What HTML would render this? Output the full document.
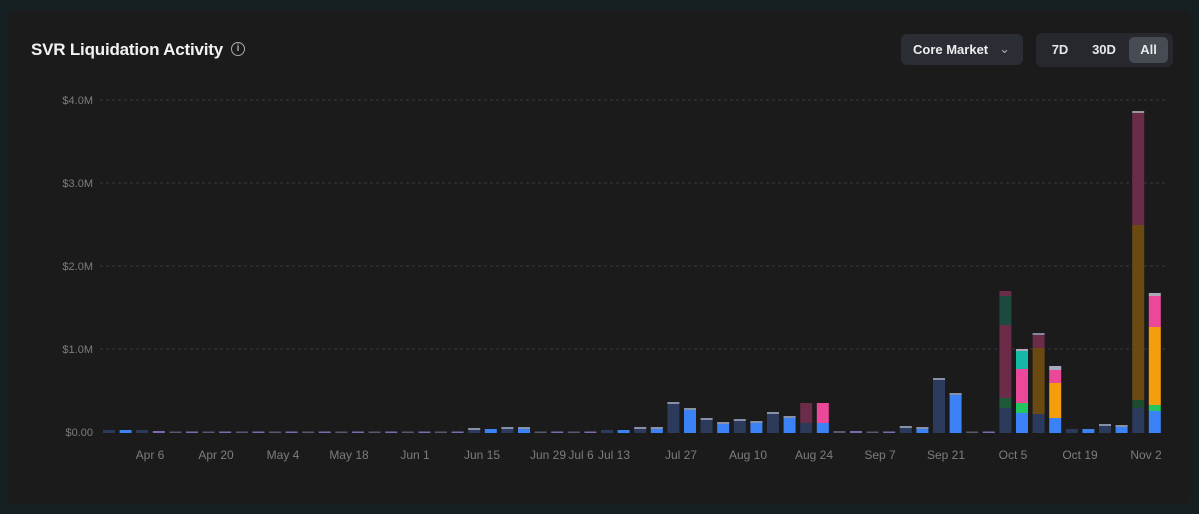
<!DOCTYPE html>
<html><head><meta charset="utf-8"><style>
body{margin:0;width:1199px;height:514px;background:#162022;overflow:hidden;font-family:"Liberation Sans",sans-serif}
.card{position:absolute;left:8px;top:10px;width:1183px;height:494px;background:#1b1b1c;border-radius:6px}
.title{position:absolute;left:31px;top:40px;color:#f2f2f2;font-size:17px;font-weight:bold;letter-spacing:-0.2px}
.info{position:absolute;left:231px;top:42px;width:12px;height:12px;border:1.5px solid #aaa;border-radius:50%;color:#aaa;font-size:10px;text-align:center;line-height:12px;font-weight:bold}
.dd{position:absolute;left:901px;top:34px;width:122px;height:31px;background:#2a2d33;border-radius:6px;color:#eee;font-size:13px;font-weight:bold;line-height:31px;padding-left:12px;box-sizing:border-box}
.dd span{position:absolute;right:13px;top:-1px;color:#aaa;font-weight:normal}
.seg{position:absolute;left:1036px;top:33px;width:137px;height:34px;background:#26282d;border-radius:6px}
.seg div{position:absolute;top:4px;height:26px;line-height:26px;color:#e8e8e8;font-size:13px;font-weight:bold;text-align:center}
</style></head><body>
<div class="card"></div>
<div class="title">SVR Liquidation Activity</div>
<div class="info">i</div>
<div class="dd">Core Market<span>&#8964;</span></div>
<div class="seg"><div style="left:6px;width:36px">7D</div><div style="left:46px;width:44px">30D</div><div style="left:93px;width:39px;background:#474b54;border-radius:5px">All</div></div>
<svg id="c" width="1199" height="514" style="position:absolute;left:0;top:0" font-family="Liberation Sans, sans-serif"></svg>
<script>
var s='';
var ys=[[100,'$4.0M'],[183,'$3.0M'],[266,'$2.0M'],[349,'$1.0M'],[432,'$0.00']];
ys.forEach(function(y){s+='<text x="93" y="'+(y[0]+4)+'" fill="#7d7d80" font-size="11" text-anchor="end">'+y[1]+'</text>';
if(y[0]<432)s+='<line x1="100" x2="1165" y1="'+y[0]+'" y2="'+y[0]+'" stroke="#3a3a3d" stroke-dasharray="3,3"/>';});
var xl=[[150,'Apr 6'],[216,'Apr 20'],[283,'May 4'],[349,'May 18'],[415,'Jun 1'],[482,'Jun 15'],[548,'Jun 29'],[581,'Jul 6'],[614,'Jul 13'],[681,'Jul 27'],[748,'Aug 10'],[814,'Aug 24'],[880,'Sep 7'],[946,'Sep 21'],[1013,'Oct 5'],[1080,'Oct 19'],[1146,'Nov 2']];
xl.forEach(function(l){s+='<text x="'+l[0]+'" y="459" fill="#7d7d80" font-size="12" text-anchor="middle">'+l[1]+'</text>';});
var D='#2c3b5c',B='#3b82f6';
var h={0:3,1:3,2:3,3:2,22:5,23:4,24:6,25:6,30:3,31:3,32:6,33:6,34:31,35:25,36:15,37:11,38:14,39:12,40:21,41:17,44:2,45:2,46:1.5,47:1.5,48:7,49:6,50:55,51:40,52:1.5,53:1.5,58:4,59:4,60:9,61:8};
var stacks={
54:[[0,25,D],[25,35,'#1e5a3a'],[35,108,'#6a2c48'],[108,137,'#1d4a3e'],[137,142,'#6a2c48']],
55:[[0,20,B],[20,30,'#22c55e'],[30,64,'#ec4899'],[64,82,'#14b8a6'],[82,84,'#aab']],
56:[[0,19,D],[19,85,'#6b4a12'],[85,98,'#6a2c48'],[98,100,'#889']],
57:[[0,15,B],[15,50,'#f59e0b'],[50,63,'#ec4899'],[63,67,'#aab']],
62:[[0,25,D],[25,33,'#1e4a30'],[33,208,'#6b4a12'],[208,320,'#6a2c48'],[320,322,'#999']],
63:[[0,22,B],[22,28,'#22c55e'],[28,106,'#f59e0b'],[106,137,'#ec4899'],[137,140,'#aab']],
42:[[0,10,D],[10,30,'#6a2c48']],43:[[0,10,B],[10,30,'#ec4899']]};
for(var i=0;i<64;i++){var x=103+i*16.6,c=i%2?B:D;
if(stacks[i]){stacks[i].forEach(function(p){s+='<rect x="'+x+'" y="'+(433-p[1])+'" width="12" height="'+(p[1]-p[0])+'" fill="'+p[2]+'"/>';});continue;}
var v=h[i]||1.5;if(!h[i]||v<3)c=i%2?'#7c6bb0':'#555a70';
s+='<rect x="'+x+'" y="'+(433-v)+'" width="12" height="'+v+'" fill="'+c+'"/>';
if(v>4)s+='<rect x="'+x+'" y="'+(433-v)+'" width="12" height="2" fill="#8890a8"/>';}
document.getElementById('c').innerHTML=s;
</script>
</body></html>
